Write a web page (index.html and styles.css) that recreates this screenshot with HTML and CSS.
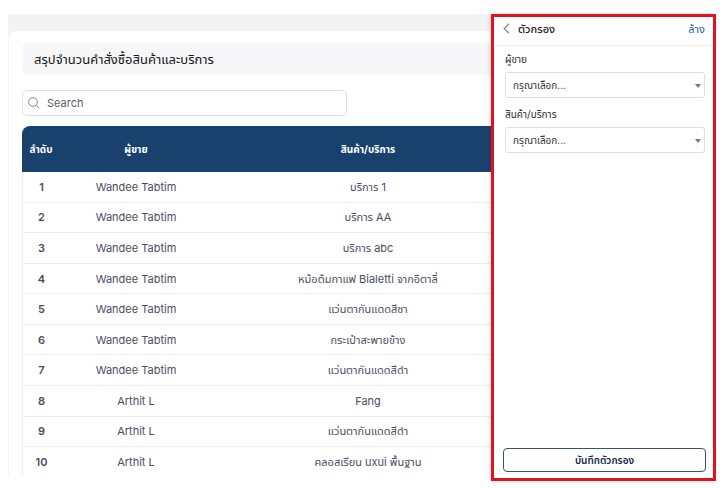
FILE: index.html
```html
<!DOCTYPE html>
<html lang="th">
<head>
<meta charset="utf-8">
<meta name="viewport" content="width=device-width, initial-scale=1">
<title>สรุปจำนวนคำสั่งซื้อสินค้าและบริการ</title>
<link rel="stylesheet" href="styles.css">
</head>
<body>
<div class="page">
  <main class="content">
    <section class="card">
      <h1 class="title">สรุปจำนวนคำสั่งซื้อสินค้าและบริการ</h1>
      <div class="search">
        <svg class="search-icon" viewBox="0 0 12 12" aria-hidden="true"><circle cx="5" cy="5" r="4.4"/><path d="M8.2 8.2 11.4 11.4"/></svg>
        <input class="search-input" type="search" placeholder="Search" aria-label="Search">
      </div>
      <div class="table-wrap">
        <table class="orders">
          <thead>
            <tr><th class="col-no">ลำดับ</th><th class="col-seller">ผู้ขาย</th><th>สินค้า/บริการ</th></tr>
          </thead>
          <tbody>
            <tr><td class="no">1</td><td>Wandee Tabtim</td><td>บริการ 1</td></tr>
            <tr><td class="no">2</td><td>Wandee Tabtim</td><td>บริการ AA</td></tr>
            <tr><td class="no">3</td><td>Wandee Tabtim</td><td>บริการ abc</td></tr>
            <tr><td class="no">4</td><td>Wandee Tabtim</td><td>หม้อต้มกาแฟ Bialetti จากอิตาลี่</td></tr>
            <tr><td class="no">5</td><td>Wandee Tabtim</td><td>แว่นตากันแดดสีชา</td></tr>
            <tr><td class="no">6</td><td>Wandee Tabtim</td><td>กระเป๋าสะพายข้าง</td></tr>
            <tr><td class="no">7</td><td>Wandee Tabtim</td><td>แว่นตากันแดดสีดำ</td></tr>
            <tr><td class="no">8</td><td>Arthit L</td><td>Fang</td></tr>
            <tr><td class="no">9</td><td>Arthit L</td><td>แว่นตากันแดดสีดำ</td></tr>
            <tr><td class="no">10</td><td>Arthit L</td><td>คลอสเรียน uxui พื้นฐาน</td></tr>
          </tbody>
        </table>
      </div>
    </section>
  </main>
  <aside class="panel">
    <header class="panel-head">
      <button class="back" type="button" aria-label="ย้อนกลับ"><svg class="back-icon" viewBox="0 0 7 11" aria-hidden="true"><path d="M6 .8 1.2 5.5 6 10.2"/></svg></button>
      <h2 class="panel-title">ตัวกรอง</h2>
      <a class="clear" href="#">ล้าง</a>
    </header>
    <form class="filters">
      <label class="label" for="seller">ผู้ขาย</label>
      <div class="select-box"><select class="select" id="seller"><option>กรุณาเลือก...</option></select></div>
      <label class="label" for="product">สินค้า/บริการ</label>
      <div class="select-box"><select class="select" id="product"><option>กรุณาเลือก...</option></select></div>
      <button class="save" type="button">บันทึกตัวกรอง</button>
    </form>
  </aside>
</div>
</body>
</html>
```
FILE: styles.css
```css
* { box-sizing: border-box; }

body {
  margin: 0;
  background: #fff;
  color: #4a4d61;
  font-family: Inter, "Noto Sans Thai", "Noto Sans", sans-serif;
  font-size: 11px;
  line-height: 16px;
}

.page {
  display: grid;
  grid-template-columns: minmax(0, 1fr) 225px;
  min-height: 100vh;
  padding: 14px 9px 7px 8px;
}

.content {
  display: flex;
  margin-bottom: 5px;
  padding-top: 17px;
  overflow: hidden;
  background: #f3f3f3;
}

.card {
  flex: 1;
  min-width: 0;
  display: flex;
  flex-direction: column;
  padding: 12px 0 0 13px;
  border-left: 1px solid #f3f3f5;
  border-top-left-radius: 8px;
  background: #fff;
}

.title {
  margin: 0 0 15px;
  padding: 4px 12px;
  border-radius: 6px 0 0 6px;
  background: #f7f7f9;
  color: #161616;
  font-size: 13px;
  font-weight: 400;
  line-height: 24px;
}

.search {
  display: flex;
  align-items: center;
  gap: 7px;
  width: 70%;
  max-width: 325px;
  height: 26px;
  margin-bottom: 10px;
  padding: 0 5px;
  border: 1px solid #dbe0e6;
  border-radius: 5px;
}

.search-icon {
  width: 12px;
  height: 12px;
  fill: none;
  stroke: #858b97;
}

.search-input {
  flex: 1;
  min-width: 0;
  padding: 0;
  border: 0;
  outline: 0;
  background: none;
  color: #565d70;
  font: inherit;
}

.search-input::placeholder { color: #565d70; opacity: 1; }

.table-wrap {
  flex: 1;
  display: flex;
  margin-right: -33px;
  border-top-left-radius: 8px;
  overflow: hidden;
}

.orders {
  flex: 1;
  width: 100%;
  table-layout: fixed;
  border-collapse: separate;
  border-spacing: 0;
  text-align: center;
}

th, td { padding: 0; }

th {
  height: 46px;
  background: #19416e;
  color: #fff;
  font-size: 10px;
  font-weight: 700;
}

td { border-bottom: 1px solid #ededf0; }
tr:last-child td { border-bottom: 0; }

.col-no { width: 38px; }
.col-seller { width: 152px; }

.no {
  border-left: 1px solid #ededf0;
  font-weight: 600;
}

.panel {
  z-index: 1;
  display: flex;
  flex-direction: column;
  border: 3px solid #df141d;
  background: #fff;
  box-shadow: -1px 0 4px rgb(60 60 90 / 20%);
}

.panel-head {
  display: flex;
  align-items: center;
  gap: 8px;
  height: 29px;
  padding: 0 8px 5px 9px;
  border-bottom: 1px solid #eeeef0;
}

.back {
  display: flex;
  padding: 0;
  border: 0;
  background: none;
}

.back-icon {
  width: 7px;
  height: 11px;
  fill: none;
  stroke: #8d8d8d;
  stroke-width: 1.3;
}

.panel-title {
  flex: 1;
  margin: 0;
  color: #202020;
  font-size: 11px;
  font-weight: 500;
}

.clear {
  color: #2860a4;
  font-size: 11px;
  text-decoration: none;
}

.filters {
  flex: 1;
  display: flex;
  flex-direction: column;
  padding: 4px 7px 6px 9px;
}

.label {
  padding: 0 2px 4px;
  color: #2d2d2d;
  font-size: 10px;
  line-height: 18px;
}

.select-box {
  position: relative;
  margin: 0 1px 7px 2px;
}

.select-box::after {
  content: "";
  position: absolute;
  top: 12px;
  right: 4px;
  border: 3px solid transparent;
  border-top: 4px solid #777;
  border-bottom: 0;
}

.select {
  display: block;
  width: 100%;
  height: 26px;
  padding: 0 7px;
  border: 1px solid #dedee2;
  border-radius: 3px;
  appearance: none;
  background: #fff;
  color: #333;
  font: inherit;
  font-size: 10px;
}

.save {
  height: 24px;
  margin-top: auto;
  padding: 0;
  border: 1px solid #355369;
  border-radius: 4px;
  background: #fff;
  color: #14284b;
  font: inherit;
  font-size: 10px;
  font-weight: 600;
}
```
